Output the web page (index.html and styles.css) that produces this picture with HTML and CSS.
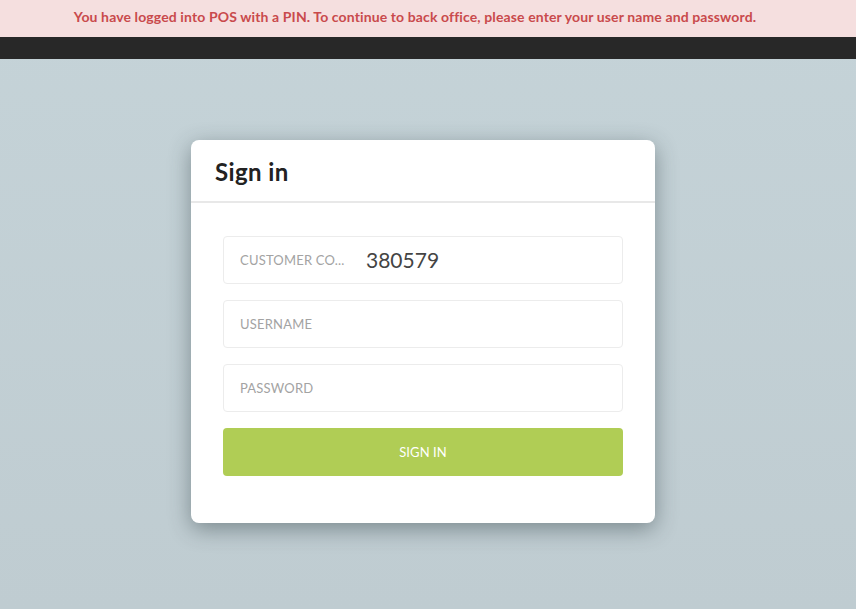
FILE: index.html
```html
<!DOCTYPE html>
<html>
<head>
<meta charset="utf-8">
<link rel="stylesheet" href="styles.css">
</head>
<body>
<div class="alert">You have logged into POS with a PIN. To continue to back office, please enter your user name and password.</div>
<div class="topbar"></div>
<main class="stage">
  <section class="card">
    <header class="card-head"><h1>Sign in</h1></header>
    <form class="card-body">
      <label class="field">
        <span class="field-label">CUSTOMER CO...</span>
        <span class="field-value">380579</span>
      </label>
      <label class="field"><span class="field-label">USERNAME</span></label>
      <label class="field"><span class="field-label">PASSWORD</span></label>
      <button type="button" class="btn">SIGN IN</button>
    </form>
  </section>
</main>
</body>
</html>
```
FILE: styles.css
```css
* { box-sizing: border-box; }
html, body { margin: 0; height: 100%; }
body {
  font-family: Lato, "Noto Sans", sans-serif;
  background: linear-gradient(#c5d3d8, #bfccd1);
  min-height: 609px;
  display: flex;
  flex-direction: column;
}
.alert {
  height: 37px;
  background: #f5dfdf;
  color: #c94a4c;
  font-weight: 700;
  font-size: 14px;
  text-align: center;
  line-height: 33px;
  letter-spacing: 0.12px;
  padding-right: 26px;
  white-space: nowrap;
}
.topbar { height: 22px; background: #282828; }
.stage {
  flex: 1;
  display: flex;
  justify-content: center;
  align-items: flex-start;
  padding-top: 81px;
  padding-right: 10px;
}
.card {
  width: 464px;
  background: #fff;
  border-radius: 8px;
  box-shadow: 0 6px 22px rgba(40, 55, 60, 0.45);
}
.card-head {
  height: 63px;
  border-bottom: 2px solid #e8e8e8;
  padding: 0 24px;
  display: flex;
  align-items: center;
}
.card-head h1 {
  margin: 0;
  font-size: 24px;
  font-weight: 700;
  color: #222;
  letter-spacing: 0.4px;
  padding-top: 2px;
}
.card-body {
  padding: 33px 32px 47px;
  display: flex;
  flex-direction: column;
  gap: 16px;
}
.field {
  height: 48px;
  border: 1px solid #ececec;
  border-radius: 4px;
  display: flex;
  align-items: center;
  padding: 0 16px;
}
.field-label {
  width: 126px;
  font-size: 13px;
  color: #a3a3a3;
  letter-spacing: 0.2px;
}
.field-value {
  font-size: 21px;
  color: #444;
  padding-bottom: 2px;
}
.btn {
  height: 48px;
  border: 0;
  border-radius: 4px;
  background: #b0cd55;
  color: #fff;
  font-family: inherit;
  font-size: 13px;
  letter-spacing: 0.1px;
}
```
